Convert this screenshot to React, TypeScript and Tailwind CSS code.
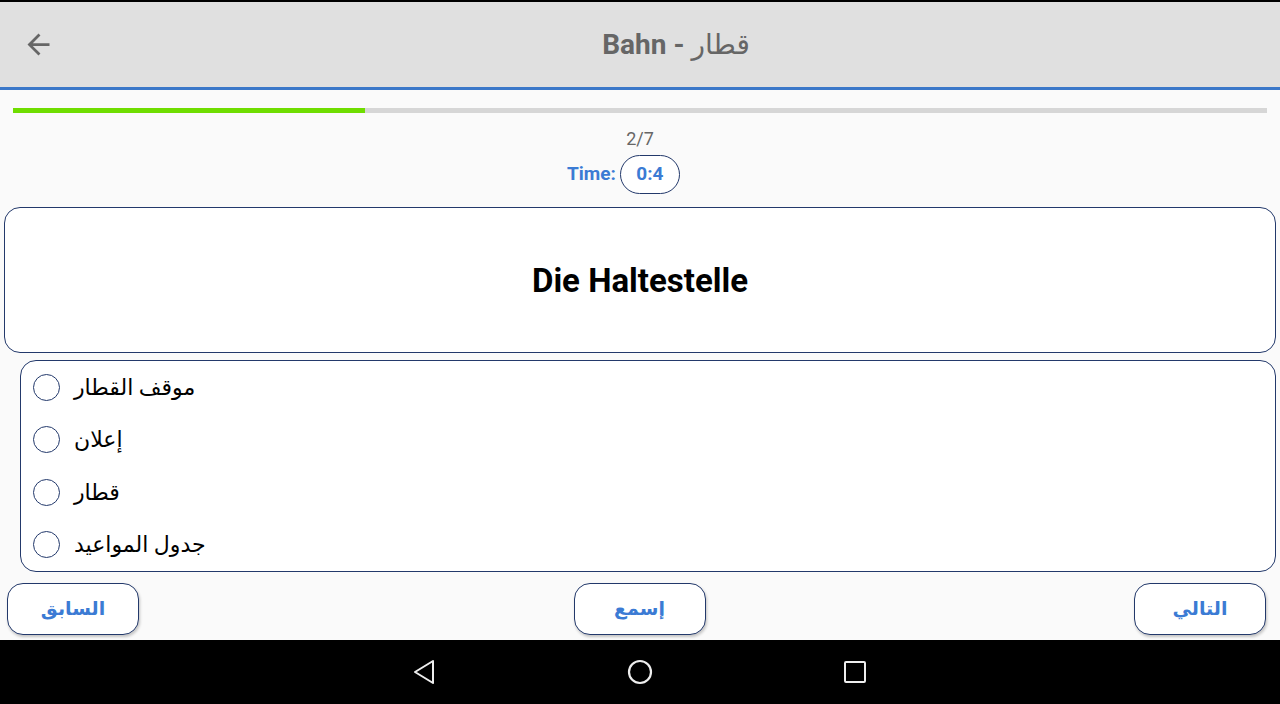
import React from 'react';

const options = ['موقف القطار', 'إعلان', 'قطار', 'جدول المواعيد'];

const BackArrow = () => (
  <svg viewBox="0 0 24 24" className="w-[33px] h-[33px]" fill="#666666">
    <path d="M20 11H7.83l5.59-5.59L12 4l-8 8 8 8 1.41-1.41L7.83 13H20v-2z" />
  </svg>
);

const NavButton: React.FC<{ label: string }> = ({ label }) => (
  <button className="w-[132px] h-[52px] rounded-[16px] border border-[#23396b] bg-white shadow-[1px_2px_3px_rgba(0,0,0,0.22)] text-[19px] font-bold text-[#3b7bd4]">
    {label}
  </button>
);

export default function App() {
  const current = 2;
  const total = 7;

  return (
    <div
      className="w-[1280px] h-[704px] flex flex-col bg-[#fafafa] overflow-hidden"
      style={{ fontFamily: 'Roboto, "Noto Sans", "DejaVu Sans", sans-serif' }}
    >
      {/* status strip */}
      <div className="h-[2px] bg-black" />

      {/* toolbar */}
      <div className="h-[85px] flex items-center bg-[#e0e0e0]">
        <div className="w-[72px] pl-[22px] flex items-center">
          <BackArrow />
        </div>
        <h1 className="flex-1 text-center text-[28px] font-bold text-[#666666]">
          Bahn - <span className="font-normal">قطار</span>
        </h1>
      </div>
      <div className="h-[3px] bg-[#3b78c9]" />

      {/* progress */}
      <div className="mx-[13px] mt-[18px] h-[5px] bg-[#d6d6d6]">
        <div className="h-full bg-[#6fdd00]" style={{ width: `${(current / total) * 100 * 0.983}%` }} />
      </div>

      <p className="mt-[14px] leading-[24px] text-center text-[18px] text-[#666666]">
        {current}/{total}
      </p>

      <div className="mt-[4px] pr-[33px] flex items-center justify-center gap-[4px]">
        <span className="text-[19px] font-bold text-[#3b7bd4]">Time:</span>
        <span className="w-[60px] h-[39px] rounded-full border border-[#23396b] bg-white flex items-center justify-center text-[19px] font-bold text-[#3b7bd4]">
          0:4
        </span>
      </div>

      {/* question */}
      <div className="mx-[4px] mt-[13px] h-[146px] rounded-[16px] border border-[#23396b] bg-white flex items-center justify-center">
        <span className="pt-[2px] text-[33px] font-bold text-black">Die Haltestelle</span>
      </div>

      {/* answers */}
      <div className="ml-[20px] mr-[4px] mt-[7px] h-[212px] rounded-[16px] border border-[#23396b] bg-white flex flex-col">
        {options.map((o) => (
          <label key={o} className="h-[53px] flex items-center pl-[12px] gap-[14px] text-[22px] text-black">
            <span className="w-[27px] h-[27px] rounded-full border-[1.5px] border-[#23396b] bg-white" />
            <span>{o}</span>
          </label>
        ))}
      </div>

      {/* buttons */}
      <div className="mt-[11px] flex justify-between pl-[7px] pr-[14px]">
        <NavButton label="السابق" />
        <div className="ml-[6px]">
          <NavButton label="إسمع" />
        </div>
        <NavButton label="التالي" />
      </div>

      {/* android nav bar */}
      <div className="mt-auto h-[64px] bg-black flex items-center justify-center gap-[189px]">
        <svg width="26" height="26" viewBox="0 0 26 26" fill="none" stroke="#eeeeee" strokeWidth="2" strokeLinejoin="round">
          <path d="M21 2 L3 13 L21 24 Z" />
        </svg>
        <svg width="26" height="26" viewBox="0 0 26 26" fill="none" stroke="#eeeeee" strokeWidth="2.2">
          <circle cx="13" cy="13" r="11" />
        </svg>
        <svg width="26" height="26" viewBox="0 0 26 26" fill="none" stroke="#eeeeee" strokeWidth="2">
          <rect x="3" y="3" width="20" height="20" rx="1" />
        </svg>
      </div>
    </div>
  );
}
